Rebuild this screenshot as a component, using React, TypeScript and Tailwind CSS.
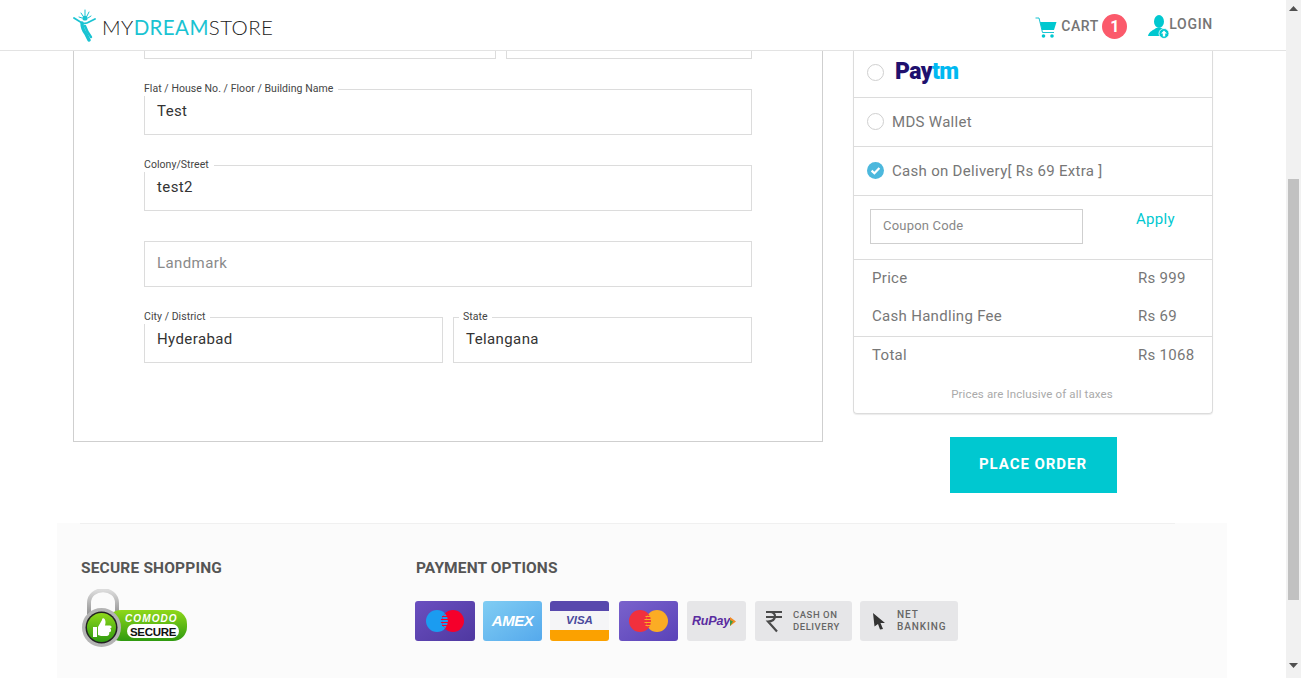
import React from "react";

const Field = ({ label, value, placeholder, className = "", labelClass = "left-[-1px] pr-[5px]" }: { label?: string; value?: string; placeholder?: string; className?: string; labelClass?: string }) => (
  <div className={`relative h-[46px] border border-[#dcdcdc] flex items-center pl-3 pb-[2px] text-[15px] tracking-[0.4px] ${className}`}>
    {label && <span className={`absolute top-[-8px] bg-white text-[10.5px] leading-[14px] tracking-[0.05px] text-[#444] ${labelClass}`}>{label}</span>}
    {value ? <span className="text-[#333]">{value}</span> : <span className="text-[#8a8a8a]">{placeholder}</span>}
  </div>
);

const Logo = () => (
  <div className="flex items-end">
    <svg width="26" height="33" viewBox="0 0 26 33">
      <g fill="none" stroke="#19c3d2" strokeLinecap="round">
        <path d="M1 9 L9 14 Q13 15 16 13 L22 10" strokeWidth="1.8" />
        <path d="M9 14 Q9 20 13 25 L16 31" strokeWidth="3.4" />
        <path d="M12 17 Q14 23 18 28" strokeWidth="2.4" />
        <path d="M8 4 L10 7 M12 1 L12 6 M16 3 L14 7 M18 7 L15 9 M6 8 L9 9" strokeWidth="1" />
      </g>
      <circle cx="12" cy="9" r="2.6" fill="#19c3d2" />
    </svg>
    <span className="ml-[3px] mb-[2px] font-['Lato'] font-light text-[20.5px] leading-[26px] tracking-[0.4px] text-[#222]">
      MY<span className="text-[#19c3d2] font-normal">DREAM</span>STORE
    </span>
  </div>
);

const Header = () => (
  <header className="h-[51px] shrink-0 bg-white border-b border-[#e3e3e3] flex items-start justify-between pl-[73px] pr-[73px]">
    <div className="pt-[9px]"><Logo /></div>
    <div className="flex items-start">
      <svg width="22" height="22" viewBox="0 0 22 22" className="mt-[17px]">
        <path d="M0.5 1 H4 L7.5 15.5 H19" fill="none" stroke="#19c3d2" strokeWidth="1" />
        <path d="M5 5 H21.5 L19 13 H7 Z" fill="#00c8d0" />
        <circle cx="8.5" cy="19" r="1.8" fill="#00c8d0" />
        <circle cx="17" cy="19" r="1.8" fill="#00c8d0" />
      </svg>
      <span className="ml-[4px] w-[36px] mt-[16px] text-[14px] leading-[20px] font-medium tracking-[0.55px] text-[#757575]">CART</span>
      <span className="ml-[5px] mt-[14px] w-[25px] h-[25px] rounded-full bg-[#fb5a6b] text-white font-bold text-[16px] flex items-center justify-center">1</span>
      <svg width="22" height="24" viewBox="0 0 22 24" className="ml-[21px] mt-[15px]">
        <ellipse cx="11" cy="6.5" rx="5" ry="6.5" fill="#00c8d0" />
        <path d="M0 21 C1 16 6 15 8 13 L14 13 C15 15 17 15 18 16 L14 21 Z" fill="#00c8d0" />
        <circle cx="16" cy="18.5" r="5" fill="#00c8d0" stroke="#fff" strokeWidth="0.8" />
        <path d="M16 15.5 L19 18.5 H17.2 V21.5 H14.8 V18.5 H13 Z" fill="#fff" />
      </svg>
      <span className="ml-[-1px] mt-[14px] text-[14px] leading-[20px] font-medium tracking-[0.7px] text-[#757575]">LOGIN</span>
    </div>
  </header>
);

const Radio = ({ on }: { on?: boolean }) =>
  on ? (
    <svg width="17" height="17" viewBox="0 0 17 17" className="shrink-0">
      <circle cx="8.5" cy="8.5" r="8.5" fill="#4cb8dd" />
      <path d="M4.6 8.6 L7.4 11.3 L12.4 6" fill="none" stroke="#fff" strokeWidth="2.2" />
    </svg>
  ) : (
    <span className="w-[17px] h-[17px] shrink-0 rounded-full border border-[#cfcfcf] bg-white" />
  );

const Row = ({ label, value }: { label: string; value: string }) => (
  <div className="flex items-center justify-between h-[38px] pb-[2px] px-[18px]">
    <span>{label}</span>
    <span className="w-[56px] whitespace-nowrap">{value}</span>
  </div>
);

const Card = ({ className = "", children }: { className?: string; children?: React.ReactNode }) => (
  <div className={`h-[40px] rounded-[3px] shrink-0 overflow-hidden ${className}`}>{children}</div>
);

const Stripes = ({ x, color }: { x: number; color: string }) => (
  <g stroke={color} strokeWidth="1">
    <path d={`M${x - 3} 15.5 h6 M${x - 4} 18.5 h8 M${x - 4} 21.5 h8 M${x - 3} 24.5 h6`} />
  </g>
);

const Payments = () => (
  <div className="flex mt-[23px] ml-[-1px]">
    <Card className="w-[60px] bg-gradient-to-br from-[#6a4fc0] to-[#4f38a0]">
      <svg width="60" height="40">
        <circle cx="22" cy="20" r="11" fill="#1b9cf0" />
        <circle cx="38" cy="20" r="11" fill="#f5002b" />
        <path d="M30 12.5 a11 11 0 0 1 0 15 a11 11 0 0 1 0 -15" fill="#1b9cf0" />
        <Stripes x={30} color="#f5002b" />
      </svg>
    </Card>
    <Card className="ml-[8px] w-[59px] bg-gradient-to-br from-[#80cdf3] to-[#55a9ec] flex items-center justify-center">
      <span className="font-['Liberation_Sans'] italic font-bold text-[15px] text-white tracking-[-0.5px]">AMEX</span>
    </Card>
    <Card className="ml-[8px] w-[59px] flex flex-col">
      <div className="h-[10px] bg-[#5848ad]" />
      <div className="h-[19px] bg-[#f5f5f7] flex items-center justify-center font-['Liberation_Sans'] italic font-bold text-[11.5px] text-[#4a4a9c]">VISA</div>
      <div className="h-[11px] bg-[#fba100]" />
    </Card>
    <Card className="ml-[10px] w-[59px] bg-gradient-to-br from-[#7a62cc] to-[#5a42b8]">
      <svg width="59" height="40">
        <circle cx="21" cy="20" r="11" fill="#f1303d" />
        <circle cx="38" cy="20" r="11" fill="#fbac24" />
        <path d="M29.5 13 a11 11 0 0 1 0 14 a11 11 0 0 1 0 -14" fill="#f1303d" />
        <Stripes x={29.5} color="#fbac24" />
      </svg>
    </Card>
    <Card className="ml-[9px] w-[59px] bg-[#e6e6e8] flex items-center pl-[5px]">
      <span className="font-['Liberation_Sans'] italic font-bold text-[12.5px] tracking-[-0.2px] text-[#5a2ca0]">RuPay</span>
      <svg width="6" height="9" viewBox="0 0 6 9" className="ml-[0.5px]"><path d="M0 0 L6 4.5 L0 9 Z" fill="#f08a24" /><path d="M0 3 L3 4.5 L0 9 Z" fill="#3d9a46" /></svg>
    </Card>
    <Card className="ml-[9px] w-[97px] bg-[#e6e6e8] flex items-center">
      <svg width="18" height="23" viewBox="0 0 18 23" className="ml-[10px] shrink-0">
        <path d="M1 2 H17 M1 7 H17 M5 2 C12 2 12 11 3 11.5 L12 21.5" fill="none" stroke="#4a4a4a" strokeWidth="2.2" />
      </svg>
      <span className="ml-[10px] text-[9.5px] leading-[12.5px] tracking-[0.55px] text-[#666] font-medium">CASH ON<br />DELIVERY</span>
    </Card>
    <Card className="ml-[8px] w-[98px] bg-[#e6e6e8] flex items-center">
      <svg width="14" height="18" viewBox="0 0 14 18" className="ml-[12px] shrink-0">
        <path d="M1 1 L13 11 L8.5 11 L11 17 L8 17.5 L6 12 L2.5 14.5 Z" fill="#333" />
      </svg>
      <span className="ml-[11px] text-[10px] leading-[12.5px] tracking-[0.9px] text-[#666] font-medium">NET<br />BANKING</span>
    </Card>
  </div>
);

const Comodo = () => (
  <svg width="106" height="59" viewBox="0 0 106 59" className="mt-[11px] ml-[1px]">
    <defs>
      <linearGradient id="g1" x1="0" y1="0" x2="0" y2="1">
        <stop offset="0" stopColor="#8ed81a" />
        <stop offset="1" stopColor="#2f9a10" />
      </linearGradient>
      <linearGradient id="g2" x1="0" y1="0" x2="0" y2="1">
        <stop offset="0" stopColor="#dcdcdc" />
        <stop offset="1" stopColor="#8a8a8a" />
      </linearGradient>
    </defs>
    <path d="M7 28 V14 C7 -3 35 -3 35 14 V28" fill="none" stroke="url(#g2)" strokeWidth="4" />
    <rect x="25" y="21" width="80" height="31" rx="14" fill="url(#g1)" />
    <rect x="45" y="35" width="52" height="14" rx="7" fill="#fff" />
    <text x="43" y="33" fontFamily="'Liberation Sans'" fontWeight="700" fontStyle="italic" fontSize="10" letterSpacing="1.1" fill="#fff">COMODO</text>
    <text x="48" y="47" fontFamily="'Liberation Sans'" fontWeight="700" fontSize="11.5" letterSpacing="-0.3" fill="#111">SECURE</text>
    <circle cx="19.5" cy="38.5" r="19.5" fill="#b4b4b4" />
    <circle cx="19.5" cy="38.5" r="16" fill="#222" />
    <circle cx="19.5" cy="38.5" r="14.5" fill="url(#g1)" />
    <path d="M11 38 H15 V48 H11 Z M16 38 L20 31 C20 28 24 29 23.5 34 L23 36.5 H28 C30 36.5 30 39.5 28 39.5 C30 40.5 29 43.5 27 43.5 C28 45.5 26 47 24.5 47 H19 L16 46 Z" fill="#fff" />
  </svg>
);

const Scrollbar = () => (
  <aside className="w-[15px] shrink-0 bg-[#f1f1f1] flex flex-col items-center">
    <svg width="9" height="5" viewBox="0 0 9 5" className="mt-[6px]"><path d="M4.5 0 L9 5 H0 Z" fill="#505050" /></svg>
    <div className="w-[11px] h-[421px] mt-[168px] bg-[#c1c1c1]" />
    <svg width="9" height="5" viewBox="0 0 9 5" className="mt-[63px]"><path d="M0 0 H9 L4.5 5 Z" fill="#505050" /></svg>
  </aside>
);

export default function App() {
  return (
    <div className="w-[1301px] h-[678px] overflow-hidden flex bg-white font-['Roboto',sans-serif]">
      <div className="w-[1286px] flex flex-col">
        <Header />
        <main className="flex pl-[73px] gap-[30px] h-[472px] shrink-0">
          <section className="w-[750px] h-[391px] border-x border-b border-[#cfcfcf] px-[70px]">
            <div className="flex gap-[10px] h-[8px]">
              <div className="w-[352px] border-x border-b border-[#dcdcdc]" />
              <div className="w-[246px] border-x border-b border-[#dcdcdc]" />
            </div>
            <div className="flex flex-col gap-[30px] mt-[30px]">
              <Field label="Flat / House No. / Floor / Building Name" value="Test" />
              <Field label="Colony/Street" value="test2" />
              <Field placeholder="Landmark" />
              <div className="flex gap-[10px]">
                <Field label="City / District" value="Hyderabad" className="w-[299px]" />
                <Field label="State" value="Telangana" className="w-[299px]" labelClass="left-[5px] px-[4px]" />
              </div>
            </div>
          </section>
          <section className="w-[360px] flex flex-col items-center">
            <div className="w-[360px] h-[363px] border-x border-b border-[#dcdcdc] rounded-b-[4px] shadow-[0_1px_1px_rgba(0,0,0,0.08)] text-[15px] tracking-[0.3px] text-[#777]">
              <div className="h-[47px] pb-[4px] border-b border-[#dcdcdc] flex items-center pl-[13px]">
                <Radio />
                <span className="ml-[11px] text-[23px] leading-[28px] font-black tracking-[-0.6px] text-[#20106e]">Pay<span className="text-[#00b9f1]">tm</span></span>
              </div>
              <div className="h-[49px] pb-[2px] border-b border-[#dcdcdc] flex items-center pl-[13px]">
                <Radio />
                <span className="ml-[8px] mt-[2px]">MDS Wallet</span>
              </div>
              <div className="h-[49px] pb-[2px] border-b border-[#dcdcdc] flex items-center pl-[13px]">
                <Radio on />
                <span className="ml-[8px] mt-[2px]">Cash on Delivery[ Rs 69 Extra ]</span>
              </div>
              <div className="h-[64px] border-b border-[#dcdcdc] flex items-start pl-[16px]">
                <div className="mt-[13px] w-[213px] h-[35px] pb-[2px] border border-[#cfcfcf] flex items-center pl-3 text-[13px] tracking-[0.2px] text-[#888]">Coupon Code</div>
                <span className="ml-[53px] mt-[12px] text-[#00c8d0]">Apply</span>
              </div>
              <div className="h-[77px] border-b border-[#dcdcdc]">
                <Row label="Price" value="Rs 999" />
                <Row label="Cash Handling Fee" value="Rs 69" />
              </div>
              <Row label="Total" value="Rs 1068" />
              <p className="text-center text-[11.5px] mt-[11px] pr-[2px] tracking-[0.13px] text-[#aaa]">Prices are Inclusive of all taxes</p>
            </div>
            <button className="mt-[23px] w-[167px] h-[56px] pb-[2px] bg-[#00c8d0] text-white font-bold text-[15px] tracking-[0.95px]">PLACE ORDER</button>
          </section>
        </main>
        <footer className="ml-[57px] w-[1170px] flex-1 bg-[#fbfbfb] flex flex-col text-[#555]">
          <div className="h-px w-[1095px] ml-[23px] bg-[#f0f0f0]" />
          <div className="flex pl-[24px] pt-[34px]">
            <div className="w-[335px]">
              <h3 className="text-[15.5px] leading-[20px] font-bold tracking-[0.18px]">SECURE SHOPPING</h3>
              <Comodo />
            </div>
            <div>
              <h3 className="text-[15.5px] leading-[20px] font-bold tracking-[0.12px]">PAYMENT OPTIONS</h3>
              <Payments />
            </div>
          </div>
        </footer>
      </div>
      <Scrollbar />
    </div>
  );
}
